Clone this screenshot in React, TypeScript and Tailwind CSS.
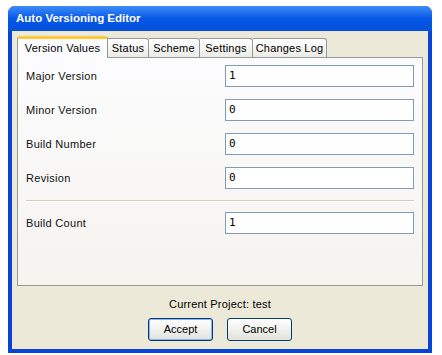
const font = { fontFamily: '"Liberation Sans", Arial, sans-serif' };

const fields = [
  { label: "Major Version", value: "1" },
  { label: "Minor Version", value: "0" },
  { label: "Build Number", value: "0" },
  { label: "Revision", value: "0" },
];

const tabs = [
  { name: "Status", w: "w-[41px]" },
  { name: "Scheme", w: "w-[51px]" },
  { name: "Settings", w: "w-[53px]" },
  { name: "Changes Log", w: "w-[74px]" },
];

function Row({ label, value }: { label: string; value: string }) {
  return (
    <div className="flex items-center h-[22px]">
      <span className="w-[207px] pl-[8px] text-[11px] tracking-[0.3px] text-[#111]">{label}</span>
      <div className="w-[189px] h-[22px] border border-[#7F9DB9] bg-white flex items-center pl-[3px] font-['DejaVu_Sans_Mono',monospace] text-[11px] text-black">
        {value}
      </div>
    </div>
  );
}

export default function App() {
  return (
    <div className="w-[442px] h-[355px] bg-white pt-[6px] pl-[8px]" style={font}>
      <div className="w-[424px] h-[347px] flex flex-col rounded-t-[7px] overflow-hidden bg-[#0845D6]">
        {/* title bar */}
        <div className="h-[25px] shrink-0 flex items-center pl-[8px] bg-gradient-to-b from-[#3D8DF9] via-[#0558E6] to-[#0450DB]">
          <span className="text-white font-bold text-[11.5px]">Auto Versioning Editor</span>
        </div>
        {/* client */}
        <div className="flex-1 mx-[4px] mb-[4px] bg-[#ECE9D8] flex flex-col px-[5px] pt-[6px]">
          <div className="flex items-end h-[21px] relative z-10 -mb-px">
            <div className="w-[91px] h-[22px] flex items-center justify-center text-[11px] tracking-[0.2px] bg-[#FCFCFE] border border-b-0 border-[#919B9C] rounded-t-[3px] border-t-[3px] border-t-[#FFC83C]">
              Version Values
            </div>
            {tabs.map((t) => (
              <div
                key={t.name}
                className={`${t.w} h-[19px] mb-px flex items-center justify-center text-[11px] tracking-[0.2px] bg-gradient-to-b from-white to-[#ECEBE6] border border-b-0 border-l-0 border-[#919B9C] rounded-tr-[3px]`}
              >
                {t.name}
              </div>
            ))}
          </div>
          <div className="h-[229px] border border-[#919B9C] bg-gradient-to-b from-[#FCFCFE] to-[#F4F3EE] flex flex-col pt-[7px]">
            <div className="flex flex-col gap-[12px]">
              {fields.map((f) => (
                <Row key={f.label} {...f} />
              ))}
            </div>
            <div className="mx-[8px] mt-[11px] mb-[10px] h-[2px] border-t border-[#D0D0BF] border-b border-b-white" />
            <Row label="Build Count" value="1" />
          </div>
          <div className="text-center text-[11px] tracking-[0.2px] mt-[10px]">Current Project: test</div>
          <div className="flex justify-center gap-[14px] mt-[5px]">
            <button className="w-[65px] h-[23px] rounded-[3px] border border-[#003C74] bg-gradient-to-b from-white to-[#E3E3DB] text-[11px] shadow-[inset_0_0_0_1px_#8CB4F2]">
              Accept
            </button>
            <button className="w-[65px] h-[23px] rounded-[3px] border border-[#003C74] bg-gradient-to-b from-white to-[#E3E3DB] text-[11px]">
              Cancel
            </button>
          </div>
        </div>
      </div>
    </div>
  );
}
